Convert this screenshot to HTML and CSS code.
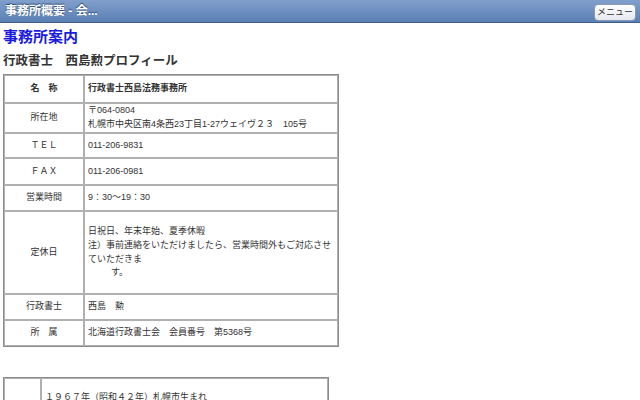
FILE: index.html
```html
<!DOCTYPE html>
<html lang="ja">
<head>
<meta charset="utf-8">
<title>事務所概要</title>
<link rel="stylesheet" href="styles.css">
</head>
<body>
<header class="bar">
  <span class="bar-title">事務所概要 - 会...</span>
  <button class="menu-btn" type="button">メニュー</button>
</header>
<main class="content">
  <h1 class="page-title">事務所案内</h1>
  <h2 class="sub-title">行政書士　西島勲プロフィール</h2>
  <table class="info">
    <colgroup><col class="c-label"><col class="c-data"></colgroup>
    <tr class="r1"><td class="label strong">名　称</td><td class="data strong">行政書士西島法務事務所</td></tr>
    <tr class="r2"><td class="label">所在地</td><td class="data">〒064-0804<br>札幌市中央区南4条西23丁目1-27ウェイヴ２３　105号</td></tr>
    <tr class="r3"><td class="label">ＴＥＬ</td><td class="data">011-206-9831</td></tr>
    <tr class="r4"><td class="label">ＦＡＸ</td><td class="data">011-206-0981</td></tr>
    <tr class="r5"><td class="label">営業時間</td><td class="data">9：30～19：30</td></tr>
    <tr class="r6"><td class="label">定休日</td><td class="data">日祝日、年末年始、夏季休暇<br>注）事前連絡をいただけましたら、営業時間外もご対応させ<br>ていただきま<br><span class="indent">す。</span></td></tr>
    <tr class="r7"><td class="label">行政書士</td><td class="data">西島　勲</td></tr>
    <tr class="r8"><td class="label">所　属</td><td class="data">北海道行政書士会　会員番号　第5368号</td></tr>
  </table>
  <table class="profile">
    <colgroup><col class="p-label"><col class="p-data"></colgroup>
    <tr><td class="label"></td><td class="data pdata">１９６７年（昭和４２年）札幌市生まれ</td></tr>
  </table>
</main>
</body>
</html>
```

FILE: styles.css
```css
html, body {
  margin: 0;
  padding: 0;
  background: #ffffff;
  font-family: "Liberation Sans", "Noto Sans CJK JP", sans-serif;
  color: #333333;
}

.bar {
  height: 22px;
  border-bottom: 1px solid #3f5f8c;
  background: linear-gradient(#819fcb, #5a7fb4);
  display: flex;
  align-items: center;
  justify-content: space-between;
  padding: 0 4px 0 5px;
}

.bar-title {
  color: #ffffff;
  font-size: 12px;
  font-weight: bold;
  text-shadow: 0 -1px 1px #2d4a73;
  line-height: 14px;
}

.menu-btn {
  height: 17px;
  width: 42px;
  padding: 0;
  margin-top: 3px;
  border: 1px solid #8a9cb4;
  border-radius: 4px;
  background: linear-gradient(#ffffff, #e4e8ee);
  color: #333333;
  font-family: "Liberation Sans", "Noto Sans CJK JP", sans-serif;
  font-size: 9px;
  line-height: 15px;
}

.content {
  padding: 0 3px;
}

.page-title {
  margin: 4px 0 0;
  font-size: 15px;
  line-height: 20px;
  color: #1a1ae0;
  font-weight: bold;
}

.sub-title {
  margin: 5px 0 4px;
  font-size: 12.5px;
  line-height: 18px;
  color: #333333;
  font-weight: bold;
}

.info, .profile {
  border: 1px solid #8c8c8c;
  border-spacing: 0;
  table-layout: fixed;
  font-size: 9px;
  line-height: 13.6px;
}

.info {
  width: 336px;
}

.c-label { width: 80px; }

.info td, .profile td {
  border: 1px solid #b0b0b0;
  padding: 0 3px;
  vertical-align: middle;
  white-space: nowrap;
}

.label {
  text-align: center;
}

.strong {
  font-weight: bold;
}

.r1 { height: 28px; }
.r2 { height: 30px; }
.r3 { height: 25px; }
.r4 { height: 27px; }
.r5 { height: 26px; }
.r6 { height: 83px; }
.r7 { height: 26px; }
.r8 { height: 26px; }

.indent {
  padding-left: 23px;
}

.profile {
  width: 326px;
  margin-top: 30px;
}

.p-label { width: 37px; }

.profile td {
  height: 60px;
}

.profile .pdata {
  vertical-align: top;
  padding-top: 12px;
}
```
